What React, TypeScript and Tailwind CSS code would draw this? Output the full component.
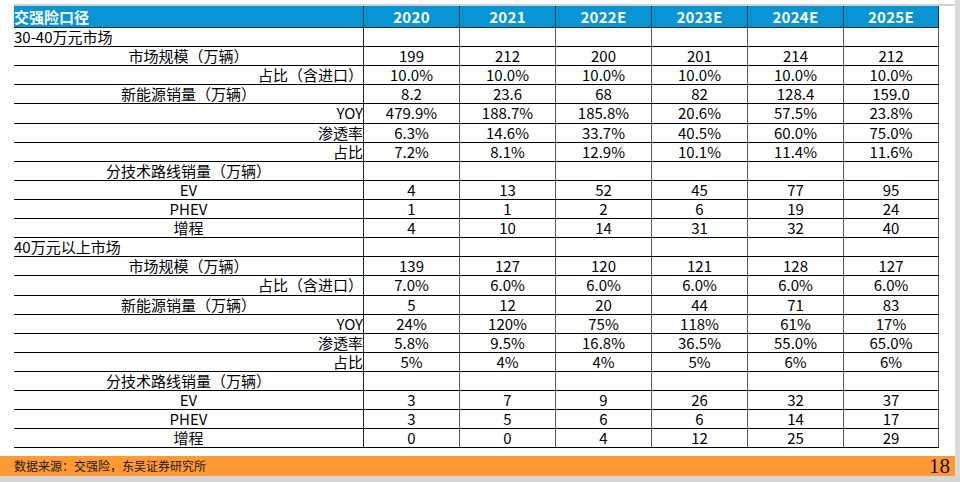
import React from "react";

type Align = "left" | "center" | "right";
type Row = { label: string; align: Align; values: string[] };

const years = ["2020", "2021", "2022E", "2023E", "2024E", "2025E"];
const empty = ["", "", "", "", "", ""];

const rows: Row[] = [
  { label: "30-40万元市场", align: "left", values: empty },
  { label: "市场规模（万辆）", align: "center", values: ["199", "212", "200", "201", "214", "212"] },
  { label: "占比（含进口）", align: "right", values: ["10.0%", "10.0%", "10.0%", "10.0%", "10.0%", "10.0%"] },
  { label: "新能源销量（万辆）", align: "center", values: ["8.2", "23.6", "68", "82", "128.4", "159.0"] },
  { label: "YOY", align: "right", values: ["479.9%", "188.7%", "185.8%", "20.6%", "57.5%", "23.8%"] },
  { label: "渗透率", align: "right", values: ["6.3%", "14.6%", "33.7%", "40.5%", "60.0%", "75.0%"] },
  { label: "占比", align: "right", values: ["7.2%", "8.1%", "12.9%", "10.1%", "11.4%", "11.6%"] },
  { label: "分技术路线销量（万辆）", align: "center", values: empty },
  { label: "EV", align: "center", values: ["4", "13", "52", "45", "77", "95"] },
  { label: "PHEV", align: "center", values: ["1", "1", "2", "6", "19", "24"] },
  { label: "增程", align: "center", values: ["4", "10", "14", "31", "32", "40"] },
  { label: "40万元以上市场", align: "left", values: empty },
  { label: "市场规模（万辆）", align: "center", values: ["139", "127", "120", "121", "128", "127"] },
  { label: "占比（含进口）", align: "right", values: ["7.0%", "6.0%", "6.0%", "6.0%", "6.0%", "6.0%"] },
  { label: "新能源销量（万辆）", align: "center", values: ["5", "12", "20", "44", "71", "83"] },
  { label: "YOY", align: "right", values: ["24%", "120%", "75%", "118%", "61%", "17%"] },
  { label: "渗透率", align: "right", values: ["5.8%", "9.5%", "16.8%", "36.5%", "55.0%", "65.0%"] },
  { label: "占比", align: "right", values: ["5%", "4%", "4%", "5%", "6%", "6%"] },
  { label: "分技术路线销量（万辆）", align: "center", values: empty },
  { label: "EV", align: "center", values: ["3", "7", "9", "26", "32", "37"] },
  { label: "PHEV", align: "center", values: ["3", "5", "6", "6", "14", "17"] },
  { label: "增程", align: "center", values: ["0", "0", "4", "12", "25", "29"] },
];

const alignClass: Record<Align, string> = {
  left: "text-left",
  center: "text-center",
  right: "text-right",
};

const font = { fontFamily: '"Noto Sans CJK SC", "Noto Sans", sans-serif' };

const HeaderRow = () => (
  <div className="grid h-[22px] grid-cols-[349px_repeat(6,96px)] border-b border-[#1d2d3a] bg-[#0795d3] text-[15px] font-bold leading-[21px] text-white">
    <div className="whitespace-nowrap">交强险口径</div>
    {years.map((y, i) => (
      <div
        key={y}
        className={`border-l border-[#1d2d3a] text-center tracking-[0.3px] ${i === years.length - 1 ? "border-r" : ""}`}
      >
        {y}
      </div>
    ))}
  </div>
);

const DataRow = ({ row }: { row: Row }) => (
  <div className="grid h-[19.12px] grid-cols-[349px_repeat(6,96px)] border-b border-black text-[15px] leading-[18px] text-black">
    <div className={`whitespace-nowrap ${alignClass[row.align]}`}>{row.label}</div>
    {row.values.map((v, i) => (
      <div
        key={i}
        className={`text-center ${i === 0 ? "border-l border-[#262626]" : "border-l border-[#5a5a5a]"} ${
          i === row.values.length - 1 ? "border-r border-r-[#5a5a5a]" : ""
        }`}
      >
        {v}
      </div>
    ))}
  </div>
);

export default function App() {
  return (
    <div className="flex h-[482px] w-[960px] flex-col overflow-hidden bg-white" style={font}>
      <div className="flex h-[476px]">
        <div className="flex w-[955px] flex-col">
          <div className="h-[4px]" />
          <div className="ml-[14px] h-[2px] bg-[#cfcfcf]" />
          <div className="ml-[14px] w-[925px]">
            <HeaderRow />
            {rows.map((r, i) => (
              <DataRow key={i} row={r} />
            ))}
          </div>
          <div className="flex-1" />
          <div className="flex h-[20px] items-center justify-between bg-[#ff9933] pl-[14px] pr-[5px]">
            <span className="text-[12px] leading-[20px] text-[#1a1a1a]">数据来源：交强险，东吴证券研究所</span>
            <span
              className="text-[21px] leading-[20px] text-[#111]"
              style={{ fontFamily: '"Liberation Serif", serif' }}
            >
              18
            </span>
          </div>
        </div>
        <div className="w-[5px] bg-[#dadada]" />
      </div>
      <div className="h-[6px] bg-[#d6d6d6]" />
    </div>
  );
}
